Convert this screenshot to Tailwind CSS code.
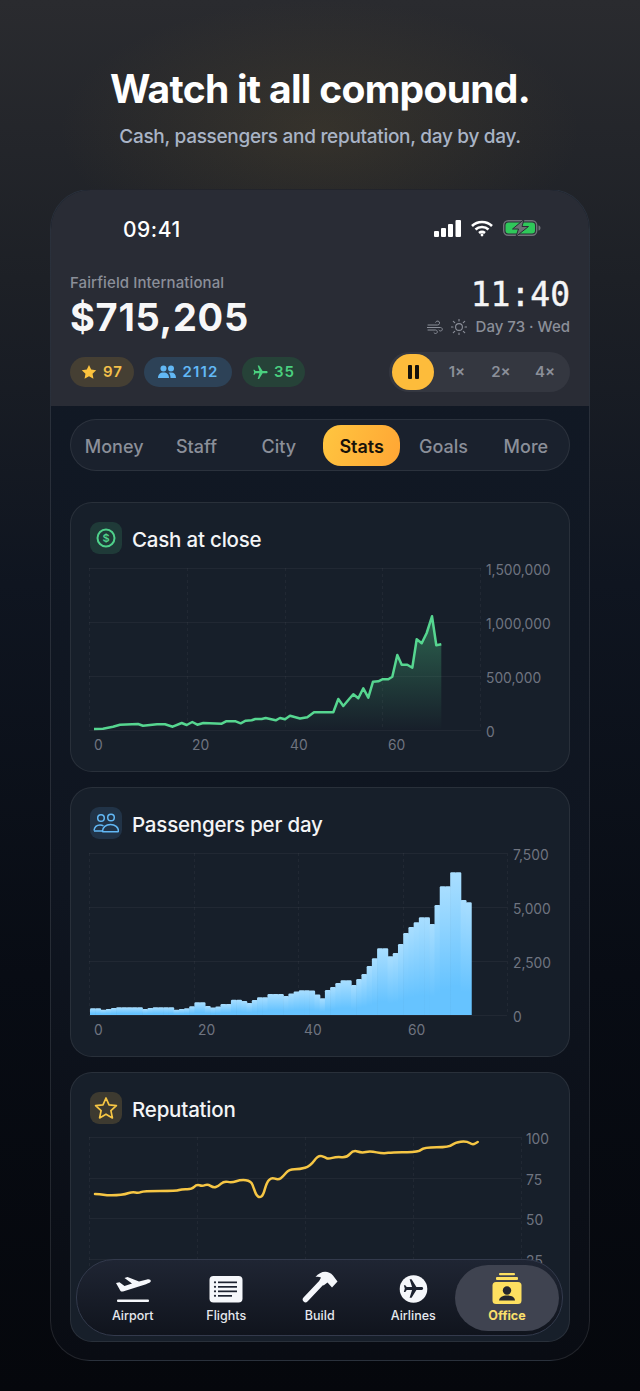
<!DOCTYPE html>
<html lang="en">
<head>
    <meta charset="UTF-8">
    <meta name="viewport" content="width=device-width, initial-scale=1.0">
    <title>Watch it all compound</title>
    <script src="https://cdn.jsdelivr.net/npm/@tailwindcss/browser@4"></script>
</head>
<body class="font-[Inter,sans-serif]">
<div class="relative w-[640px] h-[1391px] overflow-hidden flex flex-col items-center bg-[radial-gradient(ellipse_260px_130px_at_50%_130px,rgba(125,100,45,.2),transparent),linear-gradient(180deg,#2a2b2f_0%,#1d2026_20%,#0f1520_42%,#080c14_70%,#05070c_100%)]">

    <h1 class="mt-[64px] text-[39px] leading-[50px] font-bold tracking-[-0.7px] text-white">Watch it all compound.</h1>
    <p class="mt-[10px] text-[19px] leading-[26px] tracking-[-0.3px] font-medium text-[#a9b4c6]">Cash, passengers and reputation, day by day.</p>

    <!-- phone -->
    <div class="relative mt-[39px] w-[540px] h-[1172px] rounded-[40px] border border-white/10 overflow-hidden bg-[linear-gradient(180deg,#121a26_0%,#0f1520_60%,#090c13_100%)]">

        <!-- header -->
        <div class="h-[216px] bg-[#292c35] px-[19px]">
            <div class="flex items-center justify-between h-[76px] pl-[53px] pr-[29px]">
                <span class="pt-[3px] text-[21px] font-medium text-white tracking-[0.5px]">09:41</span>
                <div class="flex items-center gap-[10px]">
                    <svg width="27" height="17" viewBox="0 0 27 17" fill="#fff"><rect x="0" y="11" width="5" height="6" rx="1"/><rect x="7" y="8" width="5" height="9" rx="1"/><rect x="14" y="4" width="5" height="13" rx="1"/><rect x="21.5" y="0" width="5.5" height="17" rx="1"/></svg>
                    <svg width="22" height="17" viewBox="0 0 22 17" fill="none" stroke="#fff" stroke-width="2.6"><path d="M1 6C6.5 .6 15.500 .6 21 6"/><path d="M4.500 9.500C8 6.200 14 6.200 17.500 9.500"/><path d="M8 13C9.800 11.600 12.200 11.600 14 13"/><circle cx="11" cy="15" r="1.400" fill="#fff" stroke="none"/></svg>
                    <svg width="38" height="16" viewBox="0 0 38 16"><rect x=".7" y=".7" width="33" height="14.600" rx="4.500" fill="none" stroke="#6f7278" stroke-width="1.400"/><rect x="2.500" y="2.500" width="29.500" height="11" rx="3" fill="#2fc85a"/><path d="M35.500 5.500c1.500.3 2 1.300 2 2.500s-.5 2.200-2 2.500z" fill="#6f7278"/><path d="M21 -.5 9.500 9h6L13 16.500 25.500 6.500H19z" fill="#6c7074" stroke="#292c35" stroke-width="1"/></svg>
                </div>
            </div>
            <div class="flex justify-between mt-[8px]">
                <div>
                    <div class="text-[15px] leading-[17px] tracking-[0.1px] font-medium text-[#8b8f99]">Fairfield International</div>
                    <div class="mt-[4px] text-[38px] leading-[45px] font-bold tracking-[0.7px] text-[#f7f7f8]">$715,205</div>
                </div>
                <div class="flex flex-col items-end pt-[2px]">
                    <div class="text-[33px] leading-[38px] font-['DejaVu_Sans_Mono',monospace] text-[#f5f5f6] [-webkit-text-stroke:0.4px_#f5f5f6]">11:40</div>
                    <div class="mt-[4px] flex items-center gap-[8px] text-[15px] leading-[18px] font-medium text-[#8b8f99]">
                        <svg width="16" height="15" viewBox="0 0 16 15" fill="none" stroke="#8b8f99" stroke-width="1" stroke-linecap="round"><path d="M1 5h9.500a2 2 0 1 0-1.800-2.800"/><path d="M0 7.500h13.500a1.800 1.800 0 1 1-1.500 2.800"/><path d="M1 10h7.500a1.800 1.800 0 1 1-1.500 2.800"/></svg>
                        <svg width="16" height="16" viewBox="0 0 16 16" fill="none" stroke="#8b8f99" stroke-width="1.100" stroke-linecap="round"><circle cx="8" cy="8" r="3.400"/><path d="M8 0v2M8 14v2M0 8h2M14 8h2M2.300 2.300l1.400 1.400M12.300 12.300l1.400 1.400M2.300 13.700l1.400-1.400M12.300 3.700l1.400-1.400"/></svg>
                        <span class="ml-[1px]">Day 73 · Wed</span>
                    </div>
                </div>
            </div>
            <div class="flex items-center justify-between mt-[12px]">
                <div class="flex gap-[10px] text-[15px] font-semibold tracking-[1.1px]">
                    <div class="flex items-center justify-center gap-[6px] w-[64px] h-[30px] rounded-full bg-[#453f33] text-[#f3c04a]">
                        <svg width="16" height="16" viewBox="0 0 24 24" fill="#fcc33e"><path d="M12 1.500l3.300 6.900 7.500 1-5.500 5.200 1.400 7.500L12 18.400l-6.700 3.700 1.400-7.500L1.200 9.400l7.500-1z"/></svg>97
                    </div>
                    <div class="flex items-center justify-center gap-[7px] w-[88px] h-[30px] rounded-full bg-[#2d4257] text-[#62b8f5]">
                        <svg width="18" height="14" viewBox="0 0 18 14" fill="#62b8f5"><circle cx="5.500" cy="3.500" r="3"/><circle cx="13" cy="3.500" r="3"/><path d="M0 13c0-3.500 2-5.500 5.500-5.500S11 9.500 11 13z"/><path d="M12.500 13c0-2-.5-4-1.800-5.200.6-.2 1.400-.3 2.300-.3 3.300 0 5 2 5 5.500z"/></svg>2112
                    </div>
                    <div class="flex items-center justify-center gap-[5px] w-[63px] h-[30px] rounded-full bg-[#264238] text-[#4ad07f]">
                        <svg width="17" height="17" viewBox="0 0 24 24" fill="#4ad07f"><path transform="rotate(90 12 12)" d="M21 16v-2l-8-5V3.500c0-.83-.67-1.500-1.500-1.500S10 2.670 10 3.500V9l-8 5v2l8-2.500V19l-2 1.500V22l3.500-1 3.500 1v-1.500L13 19v-5.500l8 2.500z"/></svg>35
                    </div>
                </div>
                <div class="flex items-center w-[181px] h-[40px] rounded-full bg-[#343740] pl-[3px] text-[15px] font-semibold text-[#8b8f99]">
                    <div class="flex items-center justify-center w-[42px] h-[36px] rounded-full bg-[#fdbc3b]">
                        <svg width="11" height="14" viewBox="0 0 11 14" fill="#15120c"><rect width="4" height="14" rx="1"/><rect x="7" width="4" height="14" rx="1"/></svg>
                    </div>
                    <span class="ml-[1px] w-[44px] text-center">1×</span>
                    <span class="w-[44px] text-center">2×</span>
                    <span class="w-[44px] text-center">4×</span>
                </div>
            </div>
        </div>

        <!-- tabs -->
        <div class="mx-[19px] mt-[13px] h-[52px] rounded-full border border-white/8 bg-[#1a212d] grid grid-cols-6 items-center px-[2px] text-[18px] font-medium text-[#8b8f99]">
            <span class="pt-[2px] text-center">Money</span>
            <span class="pt-[2px] text-center">Staff</span>
            <span class="pt-[2px] text-center">City</span>
            <span class="ml-[3px] mr-[2px] pt-[2px] h-[41px] flex items-center justify-center rounded-[18px] bg-[linear-gradient(110deg,#ffc640,#ffa534)] font-semibold text-[#17120a]">Stats</span>
            <span class="pt-[2px] text-center">Goals</span>
            <span class="pt-[2px] text-center">More</span>
        </div>

        <div class="mx-[19px] mt-[31px] flex flex-col gap-[15px]">
            <!-- cash -->
            <section class="h-[270px] rounded-[22px] border border-white/8 bg-[#171f2a] px-[14px] pt-[19px]">
                <div class="flex items-center gap-[10px] pl-[5px] h-[32px]">
                    <div class="w-[32px] h-[32px] rounded-[9px] bg-[#1f3a38] flex items-center justify-center">
                        <svg width="22" height="22" viewBox="0 0 22 22"><circle cx="11" cy="11" r="8.500" fill="none" stroke="#4fd18b" stroke-width="2"/><text x="11" y="15" text-anchor="middle" font-size="11" font-weight="600" fill="#4fd18b">$</text></svg>
                    </div>
                    <h2 class="pt-[4px] text-[20.5px] leading-[28px] font-medium text-[#f3f4f6] tracking-[-0.2px]">Cash at close</h2>
                </div>
                <svg class="mt-[5px] block" width="480" height="196" viewBox="85 560 480 196" font-size="13.8" fill="#6f7480">
                    <defs>
                        <linearGradient id="cashFill" x1="0" y1="0" x2="0" y2="1"><stop offset="0" stop-color="#4fd18b" stop-opacity=".38"/><stop offset="1" stop-color="#4fd18b" stop-opacity="0"/></linearGradient>
                    </defs>
                    <g stroke="#fff" stroke-opacity=".045"><path d="M89 569.500H481M89 623.500H481M89 677.500H481M89 731.500H481"/><path stroke-dasharray="3 3" d="M89.500 569V731M187.500 569V731M285.500 569V731M382.500 569V731M480.500 569V731"/></g>
                    <path fill="url(#cashFill)" d="M94 730 103 729.700 113 727.700 120 725.700 138 725 143 726.700 157 725.300 165 725.300 172.700 727.700 181.700 724 186.700 726 192.300 723 197.300 725.700 203.300 724 221.700 724.700 226 722.300 235.700 722.300 240.700 724.300 245.700 721.700 251.700 721.300 255.300 720 261.700 720 265.700 719 275.700 721.300 280 719 285 720.300 290 716.700 300 719.500 307.300 718.300 314 713.300 333.300 713.300 338.300 700 343.300 707 350 699 353.300 695.300 358.300 699.300 363.300 689.300 368.300 698.700 373 682.700 378.300 682.300 382.300 680.300 388.300 680.300 392.300 677.700 397.300 656 401.700 665.700 407.300 665.700 412.300 668.700 416.700 640.300 421.700 644.300 426.700 634 432 617.300 436.300 646.300 441.300 645.300V731H94Z"/>
                    <polyline fill="none" stroke="#56d690" stroke-width="2.500" stroke-linejoin="round" points="94,730 103,729.700 113,727.700 120,725.700 138,725 143,726.700 157,725.300 165,725.300 172.700,727.700 181.700,724 186.700,726 192.300,723 197.300,725.700 203.300,724 221.700,724.700 226,722.300 235.700,722.300 240.700,724.300 245.700,721.700 251.700,721.300 255.300,720 261.700,720 265.700,719 275.700,721.300 280,719 285,720.300 290,716.700 300,719.500 307.300,718.300 314,713.300 333.300,713.300 338.300,700 343.300,707 350,699 353.300,695.300 358.300,699.300 363.300,689.300 368.300,698.700 373,682.700 378.300,682.300 382.300,680.300 388.300,680.300 392.300,677.700 397.300,656 401.700,665.700 407.300,665.700 412.300,668.700 416.700,640.300 421.700,644.300 426.700,634 432,617.300 436.300,646.300 441.300,645.300"/>
                    <text x="486" y="576">1,500,000</text><text x="486" y="630">1,000,000</text><text x="486" y="684">500,000</text><text x="486" y="738">0</text>
                    <text x="94" y="751">0</text><text x="192" y="751">20</text><text x="290" y="751">40</text><text x="388" y="751">60</text>
                </svg>
            </section>

            <!-- passengers -->
            <section class="h-[270px] rounded-[22px] border border-white/8 bg-[#171f2a] px-[14px] pt-[19px]">
                <div class="flex items-center gap-[10px] pl-[5px] h-[32px]">
                    <div class="w-[32px] h-[32px] rounded-[9px] bg-[#213347] flex items-center justify-center">
                        <svg width="26" height="20" viewBox="0 0 26 20" fill="none" stroke="#62b8f5" stroke-width="1.500"><circle cx="8" cy="5" r="3.300"/><circle cx="18" cy="4.500" r="3.300"/><path d="M1 17.500c.5-3.500 3-5.500 6-5.500 1.500 0 2.500.3 3.500 1"/><path d="M9.500 18.200c0-4 3.500-6.700 8-6.700s8 2.700 8 6.700c0 .3-.2.500-.5.500H10c-.3 0-.5-.2-.5-.5z"/><path d="M1 18H9"/></svg>
                    </div>
                    <h2 class="pt-[4px] text-[20.5px] leading-[28px] font-medium text-[#f3f4f6] tracking-[-0.2px]">Passengers per day</h2>
                </div>
                <svg class="mt-[5px] block" width="480" height="196" viewBox="85 845 480 196" font-size="13.8" fill="#6f7480">
                    <defs>
                        <linearGradient id="paxFill" x1="0" y1="0" x2="0" y2="1"><stop offset="0" stop-color="#a9deff"/><stop offset=".8" stop-color="#66c3ff"/></linearGradient>
                    </defs>
                    <g stroke="#fff" stroke-opacity=".045"><path d="M89 854.500H507M89 908.500H507M89 962.500H507M89 1016.500H507"/><path stroke-dasharray="3 3" d="M89.500 854V1016M194.500 854V1016M298.500 854V1016M403.500 854V1016M507.500 854V1016"/></g>
                    <g id="paxBars"></g>
                    <text x="513" y="861">7,500</text><text x="513" y="915">5,000</text><text x="513" y="969">2,500</text><text x="513" y="1023">0</text>
                    <text x="94" y="1036">0</text><text x="198" y="1036">20</text><text x="304" y="1036">40</text><text x="408" y="1036">60</text>
                </svg>
            </section>

            <!-- reputation -->
            <section class="h-[270px] rounded-[22px] border border-white/8 bg-[#171f2a] px-[14px] pt-[19px]">
                <div class="flex items-center gap-[10px] pl-[5px] h-[32px]">
                    <div class="w-[32px] h-[32px] rounded-[9px] bg-[#3d3a30] flex items-center justify-center">
                        <svg width="24" height="24" viewBox="0 0 24 24" fill="none" stroke="#f6c644" stroke-width="1.700" stroke-linejoin="round"><path d="M12 2l3 6.800 7.400.8-5.500 5 1.500 7.300L12 18.200l-6.400 3.700 1.500-7.300-5.500-5 7.400-.8z"/></svg>
                    </div>
                    <h2 class="pt-[4px] text-[20.5px] leading-[28px] font-medium text-[#f3f4f6] tracking-[-0.2px]">Reputation</h2>
                </div>
                <svg class="mt-[5px] block" width="480" height="190" viewBox="85 1130 480 190" font-size="13.8" fill="#6f7480">
                    <g stroke="#fff" stroke-opacity=".045"><path d="M89 1138.500H521M89 1179.500H521M89 1219.500H521M89 1260.500H521"/><path stroke-dasharray="3 3" d="M89.500 1138V1300M197.500 1138V1300M305.500 1138V1300M413.500 1138V1300M521.500 1138V1300"/></g>
                    <path id="repLine" fill="none" stroke="#f6c644" stroke-width="2.500" stroke-linejoin="round" stroke-linecap="round"/>
                    <text x="526" y="1145">100</text><text x="526" y="1186">75</text><text x="526" y="1226">50</text><text x="526" y="1267">25</text>
                </svg>
            </section>
        </div>

        <!-- bottom nav, floats over the last card -->
        <div class="absolute left-[25px] top-[1069px] w-[487px] h-[77px] rounded-[38px] border border-[#333a4c] bg-[linear-gradient(180deg,#1f2533,#10141d)] text-[12.5px] leading-[15px] font-medium text-[#e6e8ee]">
            <div class="flex items-center h-full pl-[9px] pt-[2px]">
                <div class="flex flex-col items-center w-[93.5px] shrink-0">
                    <svg width="36" height="28" viewBox="0 0 36 28" fill="#f5f7fb"><path d="M1 8 4.500 7.300 9.500 11 17 8.500 9.500 3 12.500 2 24 6.500 32 4.500C35 3.800 36.500 5.500 35.500 6.800 35 7.800 33 8.500 31 9.200L8 16.500C7 16.800 6 16.500 5.500 16Z"/><rect x="2" y="24.500" width="32" height="2.500" rx="1"/></svg>
                    <span class="mt-[5px]">Airport</span>
                </div>
                <div class="flex flex-col items-center w-[93.5px] shrink-0">
                    <svg width="34" height="28" viewBox="0 0 34 28"><rect x=".5" y="1" width="33" height="26.500" rx="4" fill="#f5f7fb"/><g fill="#1c2230"><rect x="9" y="6.500" width="19" height="1.700"/><rect x="9" y="11" width="19" height="1.700"/><rect x="9" y="15.500" width="19" height="1.700"/><rect x="9" y="20" width="14" height="1.700"/><circle cx="6" cy="7.300" r="1.100"/><circle cx="6" cy="11.800" r="1.100"/><circle cx="6" cy="16.300" r="1.100"/><circle cx="6" cy="20.800" r="1.100"/></g></svg>
                    <span class="mt-[5px]">Flights</span>
                </div>
                <div class="flex flex-col items-center w-[93.5px] shrink-0">
                    <svg width="36" height="33" viewBox="0 0 36 33" fill="#f5f7fb" class="-mt-[5px]"><path d="M3.500 29.500 21 11" stroke="#f5f7fb" stroke-width="5.500" stroke-linecap="round"/><path d="M13.500 7C18 1 26 -.500 31 5.500L35.500 11.500 30 17.500 25.500 12.500 21.500 15.500 17.500 10.500 19 7.500C17 6.500 15.500 6.500 13.500 7Z"/></svg>
                    <span class="mt-[5px]">Build</span>
                </div>
                <div class="flex flex-col items-center w-[93.5px] shrink-0">
                    <svg width="29" height="28" viewBox="0 0 29 29"><circle cx="14.500" cy="14.500" r="14.300" fill="#f5f7fb"/><path fill="#1c2230" transform="rotate(90 14.500 14.500) translate(2.500 2.500)" d="M21 16v-2l-8-5V3.500c0-.83-.67-1.500-1.500-1.500S10 2.670 10 3.500V9l-8 5v2l8-2.500V19l-2 1.500V22l3.500-1 3.500 1v-1.500L13 19v-5.500l8 2.500z"/></svg>
                    <span class="mt-[5px]">Airlines</span>
                </div>
                <div class="flex flex-col items-center justify-center w-[104px] h-[66px] shrink-0 -ml-[5px] -mt-[2px] rounded-[33px] bg-[#3f4350] font-bold text-[#f9df6b]">
                    <svg width="30" height="32" viewBox="0 0 30 32" fill="#fde060"><rect x="7" y="0" width="16" height="2.200" rx="1"/><rect x="4" y="4" width="22" height="3" rx="1"/><rect x=".5" y="9" width="29" height="22" rx="3.500"/><circle cx="15" cy="17.500" r="4.200" fill="#23262e"/><path d="M7 27.500c.5-3.500 3.500-5 8-5s7.500 1.500 8 5z" fill="#23262e"/></svg>
                    <span class="mt-[3px]">Office</span>
                </div>
            </div>
        </div>
    </div>
</div>

<script>
    // one bar per day, heights in px above the baseline
    const heights = [6.7,6.7,5.3,6,7,7.7,7.7,7.7,7.7,7.7,6,7,7.7,7.7,7.7,7.7,5.3,6,6.7,8.7,12.7,12.7,9,7.5,8.5,11,11,15.3,15.3,14,12,15,17.7,17.7,21,21,21,19,21.5,23.5,24.7,24.7,24.5,20.5,16.7,25,28,32,34.7,34.7,30,36,41,49,56.7,66.7,66.7,58.7,62,71,82,88,92.7,97.7,97.7,91,110,128.7,128.7,142.7,142.7,115,112.7];
    const barsGroup = document.getElementById('paxBars');
    heights.forEach((h, i) => {
        const x = 90 + i * 5.22, top = 1016 - h, w = 5.9, r = 1.2;
        const bar = document.createElementNS('http://www.w3.org/2000/svg', 'path');
        bar.setAttribute('d', `M${x} 1016V${top + r}Q${x} ${top} ${x + r} ${top}H${x + w - r}Q${x + w} ${top} ${x + w} ${top + r}V1016Z`);
        bar.setAttribute('fill', 'url(#paxFill)');
        barsGroup.appendChild(bar);
    });

    // reputation line, smoothed through the midpoints
    const rep = [[95,1195],[100,1195],[106.7,1196.3],[116.7,1196.3],[125,1195.3],[132.7,1192.7],[138.3,1194.3],[143.3,1192],[176.7,1192],[181.7,1190],[191.7,1190.3],[196.7,1185.3],[202.3,1187.3],[207.7,1185],[213.3,1188.7],[218.3,1187.3],[224,1182],[231.7,1183.7],[240.7,1180.7],[251,1181.7],[254,1190],[256.7,1197],[260,1198.5],[263.3,1196],[266.7,1183.3],[271.7,1178.3],[278.3,1181],[283.3,1177.3],[289,1170.3],[300,1170.3],[310,1167.3],[318.3,1156],[325,1158.3],[328,1160],[336.7,1157.7],[346.7,1158.7],[353.3,1151],[361.7,1154],[370,1152],[383.3,1154.7],[393.3,1153],[418.3,1153.3],[424,1148.3],[449.3,1148.3],[455,1143.3],[466.7,1142],[472.7,1146],[477.7,1143]];
    let d = `M${rep[0][0]} ${rep[0][1]}`;
    for (let i = 1; i < rep.length - 1; i++) {
        const mx = (rep[i][0] + rep[i + 1][0]) / 2, my = (rep[i][1] + rep[i + 1][1]) / 2;
        d += `Q${rep[i][0]} ${rep[i][1]} ${mx} ${my}`;
    }
    d += `L${rep[rep.length - 1][0]} ${rep[rep.length - 1][1]}`;
    document.getElementById('repLine').setAttribute('d', d);
</script>
</body>
</html>
